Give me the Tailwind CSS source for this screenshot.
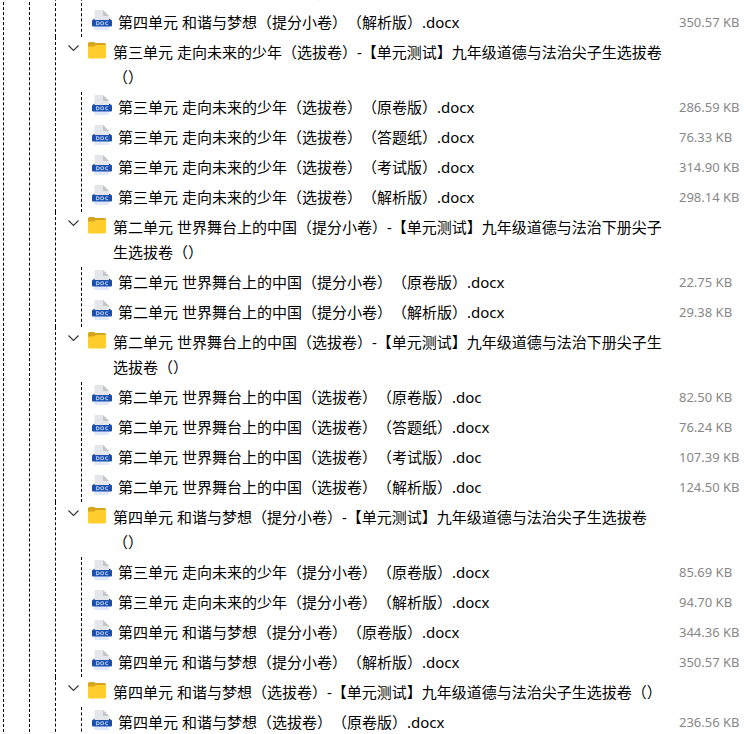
<!DOCTYPE html>
<html lang="zh-CN">

<head>
    <meta charset="UTF-8">
    <meta name="viewport" content="width=device-width, initial-scale=1.0">
    <title>文件列表</title>
    <script src="https://cdn.jsdelivr.net/npm/@tailwindcss/browser@4"></script>
</head>

<body class="bg-white font-['Noto_Sans','Noto_Sans_CJK_SC',sans-serif] text-[15px] leading-[25px] text-black [text-spacing-trim:space-all]">

    <!-- shared icons -->
    <svg class="hidden" xmlns="http://www.w3.org/2000/svg">
        <symbol id="icon-doc" viewBox="0 0 20 20">
            <path fill="#e4e6ea" d="M3.500 0H11l6 6v13a1 1 0 0 1-1 1H3.500a1 1 0 0 1-1-1V1a1 1 0 0 1 1-1Z" />
            <path fill="#dfe9fa" d="M2.500 16H17v3a1 1 0 0 1-1 1H3.500a1 1 0 0 1-1-1Z" />
            <path fill="#c3c5c9" d="M11 0l6 6h-5a1 1 0 0 1-1-1Z" />
            <path fill="#0d3c8c" d="M0 10.500 2.500 8.500v2.500ZM20 10.500 17 8.500v2.500Z" />
            <rect fill="#1b50ae" y="10" width="20" height="6.500" rx="1" />
            <g fill="none" stroke="#a9c2ee" stroke-width="1.100">
                <path d="M4.500 11.800v2.900h1.300a1.450 1.450 0 0 0 0-2.900Z" />
                <rect x="8.700" y="11.800" width="2.900" height="2.900" rx="1.200" />
                <path d="M16 12.200a1.450 1.450 0 1 0 0 2.100" />
            </g>
        </symbol>
        <symbol id="icon-folder" viewBox="0 0 18 17">
            <path fill="#d6a51f" d="M0 1.500A1.500 1.500 0 0 1 1.500 0H6l1.500 1h9A1.500 1.500 0 0 1 18 2.500V7H0Z" />
            <path fill="#ffcd2c" d="M0 4.500h6L8 3h10v12a1.500 1.500 0 0 1-1.500 1.500h-15A1.500 1.500 0 0 1 0 15Z" />
        </symbol>
        <symbol id="icon-chevron" viewBox="0 0 12 7">
            <path fill="none" stroke="#333" stroke-width="1.100" d="M.5.500 5.500 5.500 10.500.500" />
        </symbol>
    </svg>

    <main class="h-screen overflow-hidden pl-[3px]">
        <div class="-mt-[23px] border-l border-dashed border-black pl-[25px]">
            <div class="border-l border-dashed border-black pl-[25px]">
                <ul id="tree"></ul>
            </div>
        </div>
    </main>

    <script>
        const folders = [
            {
                name: "",
                files: [
                    ["第三单元 走向未来的少年（提分小卷）（解析版）.docx", "94.70 KB"],
                    ["第四单元 和谐与梦想（提分小卷）（解析版）.docx", "350.57 KB"]
                ]
            },
            {
                name: "第三单元 走向未来的少年（选拔卷）-【单元测试】九年级道德与法治尖子生选拔卷（）",
                files: [
                    ["第三单元 走向未来的少年（选拔卷）（原卷版）.docx", "286.59 KB"],
                    ["第三单元 走向未来的少年（选拔卷）（答题纸）.docx", "76.33 KB"],
                    ["第三单元 走向未来的少年（选拔卷）（考试版）.docx", "314.90 KB"],
                    ["第三单元 走向未来的少年（选拔卷）（解析版）.docx", "298.14 KB"]
                ]
            },
            {
                name: "第二单元 世界舞台上的中国（提分小卷）-【单元测试】九年级道德与法治下册尖子生选拔卷（）",
                files: [
                    ["第二单元 世界舞台上的中国（提分小卷）（原卷版）.docx", "22.75 KB"],
                    ["第二单元 世界舞台上的中国（提分小卷）（解析版）.docx", "29.38 KB"]
                ]
            },
            {
                name: "第二单元 世界舞台上的中国（选拔卷）-【单元测试】九年级道德与法治下册尖子生选拔卷（）",
                files: [
                    ["第二单元 世界舞台上的中国（选拔卷）（原卷版）.doc", "82.50 KB"],
                    ["第二单元 世界舞台上的中国（选拔卷）（答题纸）.docx", "76.24 KB"],
                    ["第二单元 世界舞台上的中国（选拔卷）（考试版）.doc", "107.39 KB"],
                    ["第二单元 世界舞台上的中国（选拔卷）（解析版）.doc", "124.50 KB"]
                ]
            },
            {
                name: "第四单元 和谐与梦想（提分小卷）-【单元测试】九年级道德与法治尖子生选拔卷（）",
                files: [
                    ["第三单元 走向未来的少年（提分小卷）（原卷版）.docx", "85.69 KB"],
                    ["第三单元 走向未来的少年（提分小卷）（解析版）.docx", "94.70 KB"],
                    ["第四单元 和谐与梦想（提分小卷）（原卷版）.docx", "344.36 KB"],
                    ["第四单元 和谐与梦想（提分小卷）（解析版）.docx", "350.57 KB"]
                ]
            },
            {
                name: "第四单元 和谐与梦想（选拔卷）-【单元测试】九年级道德与法治尖子生选拔卷（）",
                files: [
                    ["第四单元 和谐与梦想（选拔卷）（原卷版）.docx", "236.56 KB"]
                ]
            }
        ];

        const fileRow = ([name, size]) => `
            <li class="flex h-[30px] items-start pt-[3px]">
                <svg class="mr-[6px] h-5 w-5 shrink-0"><use href="#icon-doc" /></svg>
                <span class="flex-1 whitespace-nowrap">${name}</span>
                <span class="w-[65px] shrink-0 text-[13px] text-[#888]">${size}</span>
            </li>`;

        const folderRow = (name) => `
            <div class="flex items-start pt-[3px] pb-[2px] pl-3">
                <button type="button" aria-label="折叠" class="flex h-[17px] w-5 shrink-0 items-center">
                    <svg class="h-[7px] w-3"><use href="#icon-chevron" /></svg>
                </button>
                <svg class="mt-[2px] mr-[7px] h-[17px] w-[18px] shrink-0"><use href="#icon-folder" /></svg>
                <span class="mr-[75px] flex-1">${name}</span>
            </div>`;

        document.getElementById("tree").innerHTML = folders.map(({ name, files }) => `
            <li class="border-l border-dashed border-black">
                ${name ? folderRow(name) : ""}
                <ul class="ml-[25px] border-l border-dashed border-black pl-[10px]">${files.map(fileRow).join("")}</ul>
            </li>`).join("");
    </script>
</body>

</html>
